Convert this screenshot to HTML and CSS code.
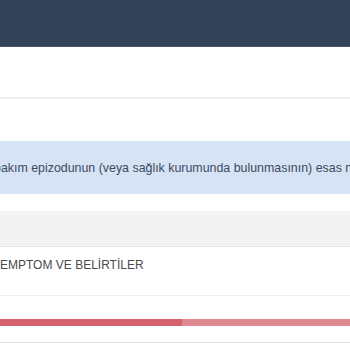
FILE: index.html
```html
<!DOCTYPE html>
<html lang="tr">
<head>
  <meta charset="UTF-8" />
  <title>Semptom ve Belirtiler</title>
  <link rel="stylesheet" href="styles.css">
</head>
<body>
  <div class="topbar"></div>

  <div class="toolbar"></div>

  <div class="content">
    <div class="alert">
      <p>bakım epizodunun (veya sağlık kurumunda bulunmasının) esas nedeni olan durum</p>
    </div>

    <div class="panel">
      <div class="panel-head"></div>
      <div class="panel-row">SEMPTOM VE BELİRTİLER</div>
      <div class="panel-row progress-row">
        <div class="progress"><div class="progress-bar" style="width: 52%"></div></div>
      </div>
    </div>
  </div>
</body>
</html>
```

FILE: styles.css
```css
body {
  margin: 0;
  font-family: Arial, "Liberation Sans", sans-serif;
  background: #fff;
  color: #444;
  overflow: hidden;
}
.topbar {
  height: 46px;
  background: #334259;
  border-bottom: 1px solid #4b5a6f;
}
.toolbar {
  height: 50px;
  border-bottom: 2px solid #efefef;
}
.content {
  padding-top: 42px;
}
.alert {
  height: 53px;
  background: #d6e3f5;
  display: flex;
  align-items: center;
  overflow: hidden;
}
.alert p {
  margin: 0;
  white-space: nowrap;
  font-size: 12.4px;
  color: #3c4a5e;
  text-indent: -6px;
}
.panel {
  margin-top: 17px;
}
.panel-head {
  height: 35px;
  background: #f3f3f3;
  border-bottom: 1px solid #e6e6e6;
}
.panel-row {
  border-bottom: 1px solid #f0f0f0;
  font-size: 12px;
  color: #4a4a4a;
  height: 49px;
  padding-top: 11px;
  box-sizing: border-box;
  white-space: nowrap;
  text-indent: -8px;
}
.progress-row {
  height: 47px;
  padding-top: 23px;
  border-bottom-color: #e4e4e4;
}
.progress {
  height: 7px;
  background: #df8891;
}
.progress-bar {
  height: 100%;
  background: #d4606b;
}
```
